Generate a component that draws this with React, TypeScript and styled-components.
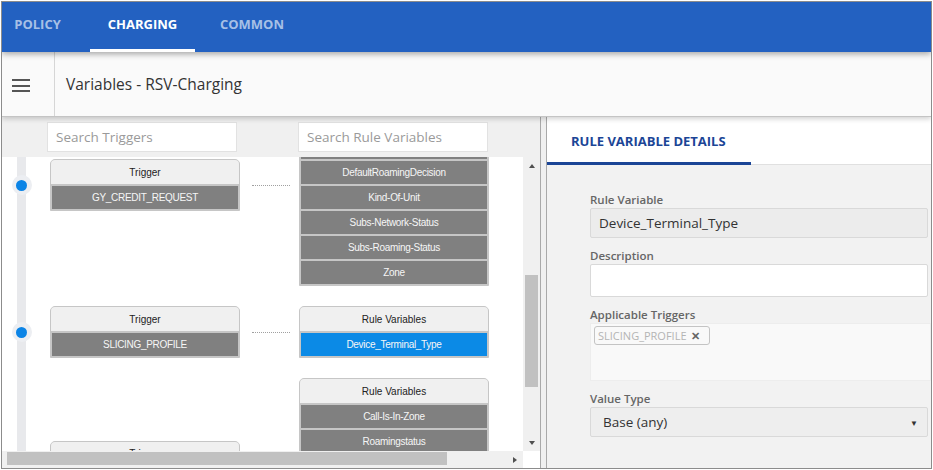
import React from 'react';
import styled, { createGlobalStyle } from 'styled-components';

const GlobalStyle = createGlobalStyle`
  html, body { margin: 0; padding: 0; background: #fff; }
  body { font-family: 'Open Sans', 'Liberation Sans', sans-serif; }
  * { box-sizing: border-box; }
`;

const Frame = styled.div`
  margin: 1px;
  width: 931px;
  height: 468px;
  border: 1px solid #8c8c8c;
  display: flex;
  flex-direction: column;
  overflow: hidden;
  background: #fff;
`;

const NavBar = styled.nav`
  height: 50px;
  flex-shrink: 0;
  background: #2361c1;
  display: flex;
  position: relative;
  z-index: 2;
  box-shadow: 0 2px 6px rgba(0, 0, 0, 0.35);
`;

const TabStrip = styled.div`
  display: flex;
  margin-left: -17px;
`;

const NavTab = styled.div<{ $active?: boolean }>`
  width: 105px;
  height: 50px;
  display: flex;
  align-items: center;
  justify-content: center;
  padding-bottom: 4px;
  font-size: 13px;
  font-weight: 700;
  color: ${(p) => (p.$active ? '#ffffff' : '#a7c0e6')};
  border-bottom: 3px solid ${(p) => (p.$active ? '#ffffff' : 'transparent')};
  &:last-child {
    padding-left: 9px;
  }
`;

const SubHeader = styled.div`
  height: 65px;
  flex-shrink: 0;
  display: flex;
  background: #fafafa;
  border-bottom: 1px solid #c4c4c4;
  position: relative;
  z-index: 1;
  box-shadow: 0 2px 5px rgba(0, 0, 0, 0.18);
`;

const MenuCell = styled.div`
  width: 53px;
  border-right: 1px solid #d6d6d6;
  display: flex;
  flex-direction: column;
  justify-content: center;
  gap: 3.5px;
  padding-left: 10px;
  padding-top: 3px;
`;

const MenuBar = styled.span`
  display: block;
  width: 18px;
  height: 2px;
  background: #555;
`;

const PageTitle = styled.div`
  display: flex;
  align-items: center;
  padding-left: 11px;
  font-size: 15.5px;
  color: #333;
`;

const Main = styled.div`
  flex: 1;
  display: flex;
  min-height: 0;
`;

const LeftPanel = styled.div`
  width: 538px;
  display: flex;
  flex-direction: column;
  background: #f0f0f0;
`;

const SearchRow = styled.div`
  height: 40px;
  flex-shrink: 0;
  display: flex;
  gap: 61px;
  padding: 5px 0 0 45px;
`;

const SearchInput = styled.input`
  width: 190px;
  height: 30px;
  border: 1px solid #e2e2e2;
  background: #fff;
  padding: 0 8px;
  font-family: 'Open Sans', sans-serif;
  font-size: 13.5px;
  color: #333;
  outline: none;
  &::placeholder { color: #9a9a9a; }
`;

const ScrollRow = styled.div`
  height: 294px;
  display: flex;
`;

const TreeViewport = styled.div`
  width: 521px;
  overflow: hidden;
  background: linear-gradient(to right, transparent 15px, #e8e9ec 15px, #e8e9ec 24px, transparent 24px), #fff;
`;

const TreeContent = styled.div<{ $scroll: number }>`
  margin-top: ${(p) => -p.$scroll}px;
  display: flex;
  flex-direction: column;
  gap: 20px;
`;

const Group = styled.div`
  display: flex;
  align-items: center;
`;

const DotCell = styled.div`
  width: 39px;
  display: flex;
  justify-content: center;
`;

const Dot = styled.span`
  width: 20px;
  height: 20px;
  border-radius: 50%;
  background: #eceef2;
  display: flex;
  align-items: center;
  justify-content: center;
  &::after {
    content: '';
    width: 11px;
    height: 11px;
    border-radius: 50%;
    background: #0b84e6;
  }
`;

const Card = styled.div`
  width: 190px;
  flex-shrink: 0;
  margin-left: 9px;
  border: 1px solid #c6c6c6;
  border-radius: 5px 5px 0 0;
  background: #c6c6c6;
  overflow: hidden;
  font-family: 'Liberation Sans', Arial, sans-serif;
`;

const CardHeader = styled.div`
  height: 25px;
  background: #f0f0f0;
  border-bottom: 1px solid #c6c6c6;
  display: flex;
  align-items: center;
  justify-content: center;
  font-size: 10px;
  color: #222;
`;

const CardRows = styled.div`
  display: flex;
  flex-direction: column;
  gap: 2px;
  padding: 1px;
`;

const CardRow = styled.div<{ $active?: boolean }>`
  height: 23px;
  display: flex;
  align-items: center;
  justify-content: center;
  font-size: 10px;
  letter-spacing: -0.3px;
  color: #f6f6f6;
  background: ${(p) => (p.$active ? '#0b8ae6' : '#808080')};
`;

const Connector = styled.span`
  width: 38px;
  margin: 1px 0 0 12px;
  border-top: 1px dotted #a0a0a0;
`;

const VScroll = styled.div`
  width: 17px;
  display: flex;
  flex-direction: column;
  background: #f0f0f0;
`;

const ArrowBox = styled.div`
  width: 17px;
  height: 17px;
  flex-shrink: 0;
  display: flex;
  align-items: center;
  justify-content: center;
`;

const Arrow = styled.span<{ $dir: 'up' | 'down' | 'right' }>`
  width: 0;
  height: 0;
  border-style: solid;
  border-color: transparent;
  ${(p) =>
    p.$dir === 'up'
      ? 'border-width: 0 3.5px 4px 3.5px; border-bottom-color: #505050;'
      : p.$dir === 'down'
        ? 'border-width: 4px 3.5px 0 3.5px; border-top-color: #505050;'
        : 'border-width: 3.5px 0 3.5px 4px; border-left-color: #505050;'}
`;

const VTrack = styled.div<{ $offset: number }>`
  flex: 1;
  padding: ${(p) => p.$offset}px 2px 0;
`;

const VThumb = styled.div<{ $size: number }>`
  height: ${(p) => p.$size}px;
  background: #c1c1c1;
`;

const HScrollRow = styled.div`
  height: 17px;
  display: flex;
`;

const HTrack = styled.div`
  width: 521px;
  display: flex;
  align-items: flex-start;
  padding: 1px 0 0 5px;
  background: #f0f0f0;
`;

const HThumb = styled.div<{ $size: number }>`
  width: ${(p) => p.$size}px;
  height: 13px;
  background: #c1c1c1;
`;

const HArrowBox = styled(ArrowBox)`
  margin-left: auto;
  height: 15px;
`;

const Corner = styled.div`
  width: 17px;
  background: #fff;
`;

const Splitter = styled.div`
  width: 7px;
  flex-shrink: 0;
  background: #f0f0f0;
  border-left: 1px solid #a9a9a9;
  border-right: 1px solid #a9a9a9;
`;

const RightPanel = styled.div`
  flex: 1;
  display: flex;
  flex-direction: column;
  background: #f2f2f2;
  overflow: hidden;
`;

const DetailTabs = styled.div`
  height: 48px;
  flex-shrink: 0;
  display: flex;
  background: #fff;
  border-bottom: 1px solid #e0e0e0;
`;

const DetailTab = styled.div`
  width: 204px;
  display: flex;
  align-items: center;
  padding: 2px 0 0 24px;
  font-size: 13px;
  font-weight: 700;
  color: #1b4596;
  border-bottom: 3px solid #1b4596;
  margin-bottom: -1px;
`;

const Form = styled.div`
  padding: 28px 3px 0 43px;
  display: flex;
  flex-direction: column;
  gap: 11px;
`;

const Field = styled.div`
  display: flex;
  flex-direction: column;
`;

const Label = styled.label`
  font-size: 11.5px;
  line-height: 14px;
  font-weight: 600;
  color: #666;
  margin-bottom: 1px;
`;

const TextBox = styled.div<{ $height: number; $readOnly?: boolean }>`
  height: ${(p) => p.$height}px;
  display: flex;
  align-items: center;
  padding-left: 8px;
  border: 1px solid #d9d9d9;
  border-radius: 2px;
  background: ${(p) => (p.$readOnly ? '#ececec' : '#fff')};
  font-size: 13.5px;
  color: #333;
`;

const TagBox = styled.div`
  height: 58px;
  margin-right: -3px;
  padding: 2px 3px;
  border: 1px solid #ededed;
  background: #f9f9f9;
  display: flex;
  align-items: flex-start;
`;

const Chip = styled.span`
  display: inline-flex;
  align-items: center;
  gap: 4px;
  height: 19px;
  padding: 0 9px 0 3px;
  border: 1px solid #c4c4c4;
  border-radius: 3px;
  font-size: 11px;
  color: #b4b4b4;
`;

const ChipClose = styled.span`
  font-size: 11px;
  font-weight: 700;
  color: #666;
`;

const Select = styled.div`
  height: 30px;
  display: flex;
  align-items: center;
  justify-content: space-between;
  padding: 0 9px 0 12px;
  border: 1px solid #d9d9d9;
  border-radius: 2px;
  background: #eeeeee;
  font-size: 13.5px;
  color: #333;
`;

const Caret = styled.span`
  font-size: 8px;
  color: #333;
`;

interface TreeGroup {
  trigger: string;
  vars: string[];
  active?: string;
}

const groups: TreeGroup[] = [
  {
    trigger: 'GY_CREDIT_REQUEST',
    vars: [
      'APN-Name',
      'Charging-Characteristics',
      'DefaultRoamingDecision',
      'Kind-Of-Unit',
      'Subs-Network-Status',
      'Subs-Roaming-Status',
      'Zone',
    ],
  },
  { trigger: 'SLICING_PROFILE', vars: ['Device_Terminal_Type'], active: 'Device_Terminal_Type' },
  {
    trigger: 'GY_TERMINATE_REQUEST',
    vars: ['Call-Is-In-Zone', 'Roamingstatus', 'Subs-Network-Status', 'Subs-Roaming-Status', 'Kind-Of-Unit', 'Zone'],
  },
];

const App = () => {
  return (
    <>
      <GlobalStyle />
      <Frame>
        <NavBar>
          <TabStrip>
            <NavTab>POLICY</NavTab>
            <NavTab $active>CHARGING</NavTab>
            <NavTab>COMMON</NavTab>
          </TabStrip>
        </NavBar>
        <SubHeader>
          <MenuCell>
            <MenuBar />
            <MenuBar />
            <MenuBar />
          </MenuCell>
          <PageTitle>Variables - RSV-Charging</PageTitle>
        </SubHeader>
        <Main>
          <LeftPanel>
            <SearchRow>
              <SearchInput placeholder="Search Triggers" />
              <SearchInput placeholder="Search Rule Variables" />
            </SearchRow>
            <ScrollRow>
              <TreeViewport>
                <TreeContent $scroll={73}>
                  {groups.map((g) => (
                    <Group key={g.trigger}>
                      <DotCell>
                        <Dot />
                      </DotCell>
                      <Card>
                        <CardHeader>Trigger</CardHeader>
                        <CardRows>
                          <CardRow>{g.trigger}</CardRow>
                        </CardRows>
                      </Card>
                      <Connector />
                      <Card>
                        <CardHeader>Rule Variables</CardHeader>
                        <CardRows>
                          {g.vars.map((v) => (
                            <CardRow key={v} $active={v === g.active}>
                              {v}
                            </CardRow>
                          ))}
                        </CardRows>
                      </Card>
                    </Group>
                  ))}
                </TreeContent>
              </TreeViewport>
              <VScroll>
                <ArrowBox>
                  <Arrow $dir="up" />
                </ArrowBox>
                <VTrack $offset={101}>
                  <VThumb $size={112} />
                </VTrack>
                <ArrowBox>
                  <Arrow $dir="down" />
                </ArrowBox>
              </VScroll>
            </ScrollRow>
            <HScrollRow>
              <HTrack>
                <HThumb $size={440} />
                <HArrowBox>
                  <Arrow $dir="right" />
                </HArrowBox>
              </HTrack>
              <Corner />
            </HScrollRow>
          </LeftPanel>
          <Splitter />
          <RightPanel>
            <DetailTabs>
              <DetailTab>RULE VARIABLE DETAILS</DetailTab>
            </DetailTabs>
            <Form>
              <Field>
                <Label>Rule Variable</Label>
                <TextBox $height={30} $readOnly>
                  Device_Terminal_Type
                </TextBox>
              </Field>
              <Field>
                <Label>Description</Label>
                <TextBox $height={33} />
              </Field>
              <Field>
                <Label>Applicable Triggers</Label>
                <TagBox>
                  <Chip>
                    SLICING_PROFILE
                    <ChipClose>✕</ChipClose>
                  </Chip>
                </TagBox>
              </Field>
              <Field>
                <Label>Value Type</Label>
                <Select>
                  Base (any)
                  <Caret>▼</Caret>
                </Select>
              </Field>
            </Form>
          </RightPanel>
        </Main>
      </Frame>
    </>
  );
};

export default App;
